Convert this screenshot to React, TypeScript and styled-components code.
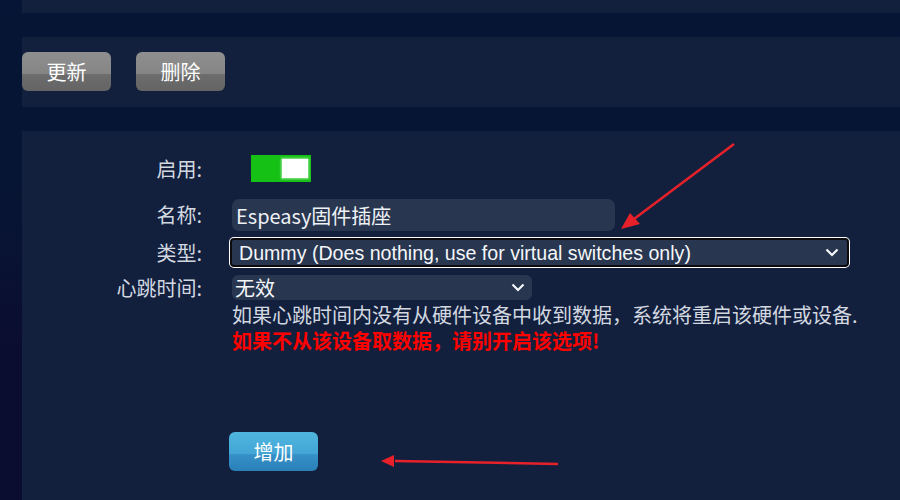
import React from "react";
import styled, { createGlobalStyle } from "styled-components";

const Global = createGlobalStyle`
  html, body { margin: 0; padding: 0; }
  body {
    width: 900px;
    height: 500px;
    overflow: hidden;
    background: linear-gradient(180deg, #061535 0%, #071533 40%, #0b0d30 70%, #0b0d30 100%);
    font-family: "Noto Sans CJK SC", "Noto Sans", sans-serif;
  }
`;

const Page = styled.div`
  padding-left: 22px;
  display: flex;
  flex-direction: column;
  gap: 24px;
  height: 500px;
  box-sizing: border-box;
`;

const Panel = styled.section<{ $h?: number }>`
  background: #12203d;
  ${(p) => (p.$h !== undefined ? `height: ${p.$h}px;` : "flex: 1;")}
  box-sizing: border-box;
  position: relative;
`;

const ButtonBar = styled.div`
  display: flex;
  gap: 25px;
  padding-top: 15px;
`;

const Btn = styled.button<{ $variant: "grey" | "blue" }>`
  width: 89px;
  height: 39px;
  border: none;
  border-radius: 6px;
  color: #fff;
  font-family: "Noto Sans CJK SC", sans-serif;
  font-size: 20px;
  padding: 0;
  cursor: pointer;
  background: ${(p) =>
    p.$variant === "grey"
      ? "linear-gradient(180deg, #8f8f8f 0%, #858585 55%, #6c6c6c 58%, #646464 100%)"
      : "linear-gradient(180deg, #4fb6de 0%, #43a6d6 55%, #3691c8 58%, #2a7fb8 100%)"};
`;

const Form = styled.div`
  display: flex;
  flex-direction: column;
  padding-top: 24px;
`;

const Row = styled.div<{ $mt?: number; $h: number }>`
  display: grid;
  grid-template-columns: 180px 1fr;
  column-gap: 28px;
  align-items: center;
  height: ${(p) => p.$h}px;
  margin-top: ${(p) => p.$mt ?? 0}px;
`;

const Label = styled.div`
  text-align: right;
  color: #d3d8e0;
  font-size: 20px;
  line-height: 24px;
`;

const Field = styled.div<{ $ml?: number }>`
  display: flex;
  align-items: center;
  margin-left: ${(p) => p.$ml ?? 0}px;
  height: 100%;
`;

const Toggle = styled.div`
  width: 60px;
  height: 27px;
  background: #16c116;
  display: flex;
  justify-content: flex-end;
  align-items: center;
  padding-right: 3px;
  box-sizing: border-box;
`;

const Knob = styled.div`
  width: 26px;
  height: 19px;
  background: #fff;
  box-shadow: 0 0 2px 1px rgba(170, 235, 170, 0.9);
`;

const TextInput = styled.div`
  width: 383px;
  height: 32px;
  background: #283650;
  border-radius: 7px;
  color: #eef1f5;
  font-size: 20px;
  display: flex;
  align-items: center;
  padding-left: 4px;
  box-sizing: border-box;
  margin-left: 2px;
`;

const Select = styled.div<{ $w: number; $focused?: boolean }>`
  width: ${(p) => p.$w}px;
  height: ${(p) => (p.$focused ? 29 : 25)}px;
  background: #283650;
  border-radius: ${(p) => (p.$focused ? 4 : 6)}px;
  box-sizing: border-box;
  display: flex;
  align-items: center;
  justify-content: space-between;
  padding: 0 ${(p) => (p.$focused ? 8 : 7)}px 0 ${(p) => (p.$focused ? 7 : 3)}px;
  margin-left: ${(p) => (p.$focused ? 0 : 2)}px;
  color: #f4f6f9;
  line-height: 24px;
  ${(p) =>
    p.$focused
      ? `border: 2px solid #0c0c10; box-shadow: 0 0 0 1px #ffffff; font-family: "Liberation Sans", Arial, sans-serif; font-size: 19.6px;`
      : `font-size: 20px;`}
`;

const Chevron = () => (
  <svg width="14" height="9" viewBox="0 0 14 9">
    <polyline points="1.5,1.5 7,7 12.5,1.5" fill="none" stroke="#f4f6f9" strokeWidth="2.2" />
  </svg>
);

const Help = styled.div`
  margin-left: 210px;
  font-size: 20px;
  color: #d3d8e0;
  margin-top: 2px;
  display: flex;
  flex-direction: column;
`;

const HelpLine = styled.div<{ $warn?: boolean }>`
  height: 26px;
  line-height: 26px;
  white-space: nowrap;
  ${(p) => (p.$warn ? "color: #ff0000; font-weight: bold;" : "")}
`;

const AddWrap = styled.div`
  margin: 78px 0 0 207px;
`;

const Overlay = styled.svg`
  position: absolute;
  left: -22px;
  top: -131px;
  width: 900px;
  height: 500px;
  pointer-events: none;
`;

export default function App() {
  return (
    <>
      <Global />
      <Page>
        <Panel $h={13} />
        <Panel $h={70}>
          <ButtonBar>
            <Btn $variant="grey">更新</Btn>
            <Btn $variant="grey">删除</Btn>
          </ButtonBar>
        </Panel>
        <Panel>
          <Form>
            <Row $h={27}>
              <Label>启用:</Label>
              <Field $ml={21}>
                <Toggle>
                  <Knob />
                </Toggle>
              </Field>
            </Row>
            <Row $h={32} $mt={17}>
              <Label>名称:</Label>
              <Field>
                <TextInput>Espeasy固件插座</TextInput>
              </Field>
            </Row>
            <Row $h={29} $mt={7}>
              <Label>类型:</Label>
              <Field>
                <Select $w={619} $focused>
                  <span>Dummy (Does nothing, use for virtual switches only)</span>
                  <Chevron />
                </Select>
              </Field>
            </Row>
            <Row $h={25} $mt={8}>
              <Label>心跳时间:</Label>
              <Field>
                <Select $w={300}>
                  <span>无效</span>
                  <Chevron />
                </Select>
              </Field>
            </Row>
            <Help>
              <HelpLine>如果心跳时间内没有从硬件设备中收到数据，系统将重启该硬件或设备.</HelpLine>
              <HelpLine $warn>如果不从该设备取数据，请别开启该选项!</HelpLine>
            </Help>
            <AddWrap>
              <Btn $variant="blue">增加</Btn>
            </AddWrap>
          </Form>
          <Overlay viewBox="0 0 900 500">
            <line x1="734" y1="144" x2="634" y2="219" stroke="#e8202a" strokeWidth="2.5" />
            <polygon points="621,229 630,213 640,224" fill="#e8202a" />
            <line x1="558" y1="464" x2="395" y2="461" stroke="#e8202a" strokeWidth="2.5" />
            <polygon points="381,461 394,455 394,467" fill="#e8202a" />
          </Overlay>
        </Panel>
      </Page>
    </>
  );
}
